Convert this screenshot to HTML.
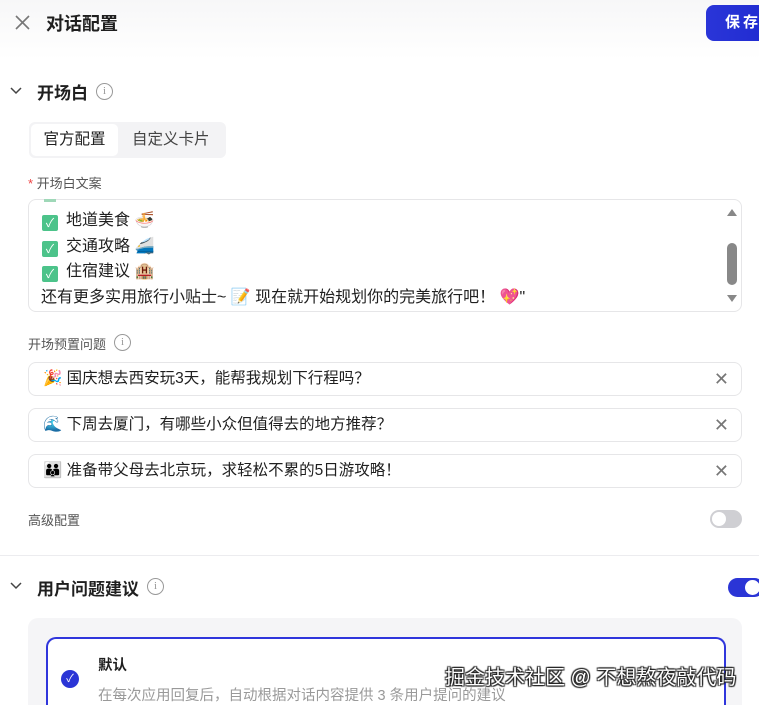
<!DOCTYPE html>
<html style="overflow:hidden;height:705px"><head><meta charset="utf-8"><style>
*{box-sizing:border-box;margin:0;padding:0}
body{width:759px;height:705px;overflow:hidden;background:#fff;font-family:"Liberation Sans","Noto Sans CJK SC",sans-serif;color:#1f1f1f;position:relative}
.a{position:absolute}
.hdr{left:0;top:0;width:759px;height:60px;background:linear-gradient(#f7f7f8,#fff)}
.t{font-weight:bold;font-size:18px}
.info{width:17px;height:17px;border:1px solid #999;border-radius:50%;font-size:11px;color:#999;text-align:center;line-height:15px;font-family:"Liberation Serif",serif}
.box{border:1px solid #e6e6e8;border-radius:8px;background:#fff}
.q{left:28px;width:714px;height:34px;font-size:15.5px;line-height:32px;padding-left:14px}
.q .x{position:absolute;right:12px;top:0;color:#777;font-size:18px}
.ln{left:42px;font-size:16px}
.ck{display:inline-block;width:16px;height:16px;background:#4cc38a;border-radius:2px;color:#fff;font-size:12px;text-align:center;line-height:16px;margin-right:8px;vertical-align:-2px}
.lbl{font-size:13px;color:#555}
</style></head><body>
<div class="a hdr"></div>
<svg class="a" style="left:14px;top:14px" width="17" height="17" viewBox="0 0 17 17"><path d="M2 2L15 15M15 2L2 15" stroke="#777" stroke-width="1.6"/></svg>
<div class="a t" style="left:46px;top:10px">对话配置</div>
<div class="a" style="left:706px;top:5px;width:70px;height:36px;border-radius:8px;background:linear-gradient(90deg,#2a35d8,#1f2ad0);color:#fff;font-size:15px;font-weight:bold;line-height:36px;padding-left:19px;letter-spacing:3px">保存</div>

<svg class="a" style="left:9px;top:85px" width="14" height="12"><path d="M2 3L7 8L12 3" stroke="#444" stroke-width="1.5" fill="none"/></svg>
<div class="a t" style="left:37px;top:79px;font-size:17px">开场白</div>
<div class="a info" style="left:96px;top:83px">i</div>

<div class="a" style="left:29px;top:122px;width:197px;height:36px;background:#f3f3f5;border-radius:6px"></div>
<div class="a" style="left:31px;top:124px;width:87px;height:32px;background:#fff;border-radius:5px;font-size:15.5px;line-height:32px;text-align:center">官方配置</div>
<div class="a" style="left:132px;top:124px;font-size:15.5px;line-height:32px;color:#444">自定义卡片</div>

<div class="a lbl" style="left:28px;top:173px"><span style="color:#e44">*</span> 开场白文案</div>
<div class="a box" style="left:28px;top:199px;width:714px;height:113px;overflow:hidden"></div>
<div class="a" style="left:44px;top:199px;width:12px;height:3px;background:#9fd8b8"></div>
<div class="a ln" style="top:206px"><span class="ck">✓</span>地道美食 🍜</div>
<div class="a ln" style="top:232px"><span class="ck">✓</span>交通攻略 🚄</div>
<div class="a ln" style="top:257px"><span class="ck">✓</span>住宿建议 🏨</div>
<div class="a" style="left:41px;top:283px;font-size:16px">还有更多实用旅行小贴士~ 📝 现在就开始规划你的完美旅行吧！ 💖"</div>
<svg class="a" style="left:726px;top:207px" width="12" height="98"><path d="M1 9L6 2L11 9Z" fill="#888"/><rect x="1" y="36" width="10" height="42" rx="5" fill="#888"/><path d="M1 88L6 95L11 88Z" fill="#888"/></svg>

<div class="a lbl" style="left:28px;top:334px">开场预置问题</div>
<div class="a info" style="left:114px;top:334px">i</div>
<div class="a box q" style="top:362px">🎉 国庆想去西安玩3天，能帮我规划下行程吗？<span class="x">✕</span></div>
<div class="a box q" style="top:408px">🌊 下周去厦门，有哪些小众但值得去的地方推荐？<span class="x">✕</span></div>
<div class="a box q" style="top:454px">👪 准备带父母去北京玩，求轻松不累的5日游攻略！<span class="x">✕</span></div>

<div class="a lbl" style="left:28px;top:510px">高级配置</div>
<div class="a" style="left:710px;top:510px;width:32px;height:18px;border-radius:9px;background:#cfcfd3"><div style="position:absolute;left:2px;top:2px;width:14px;height:14px;border-radius:50%;background:#fff"></div></div>
<div class="a" style="left:0;top:555px;width:759px;height:1px;background:#ececef"></div>

<svg class="a" style="left:9px;top:580px" width="14" height="12"><path d="M2 3L7 8L12 3" stroke="#444" stroke-width="1.5" fill="none"/></svg>
<div class="a t" style="left:37px;top:575px;font-size:17px">用户问题建议</div>
<div class="a info" style="left:147px;top:578px">i</div>
<div class="a" style="left:728px;top:578px;width:36px;height:19px;border-radius:10px;background:#2b35d6"><div style="position:absolute;left:17px;top:2px;width:15px;height:15px;border-radius:50%;background:#fff"></div></div>

<div class="a" style="left:28px;top:618px;width:714px;height:87px;background:#f5f5f7;border-radius:10px 10px 0 0"></div>
<div class="a" style="left:46px;top:637px;width:680px;height:68px;background:#fff;border:2px solid #3036dc;border-bottom:none;border-radius:10px 10px 0 0"></div>
<div class="a" style="left:61px;top:670px;width:18px;height:18px;border-radius:50%;background:#2b35d6;color:#fff;font-size:11px;text-align:center;line-height:18px">✓</div>
<div class="a" style="left:98px;top:654px;font-size:14.5px;font-weight:bold">默认</div>
<div class="a" style="left:98px;top:684px;font-size:14.5px;color:#999">在每次应用回复后，自动根据对话内容提供 3 条用户提问的建议</div>
<div class="a" style="left:445px;top:661px;font-size:20px;color:#fff;text-shadow:0 0 1px #222,1px 1px 1px #222,-1px -1px 1px #222,1px -1px 1px #222,-1px 1px 1px #222">掘金技术社区 @ 不想熬夜敲代码</div>
</body></html>
